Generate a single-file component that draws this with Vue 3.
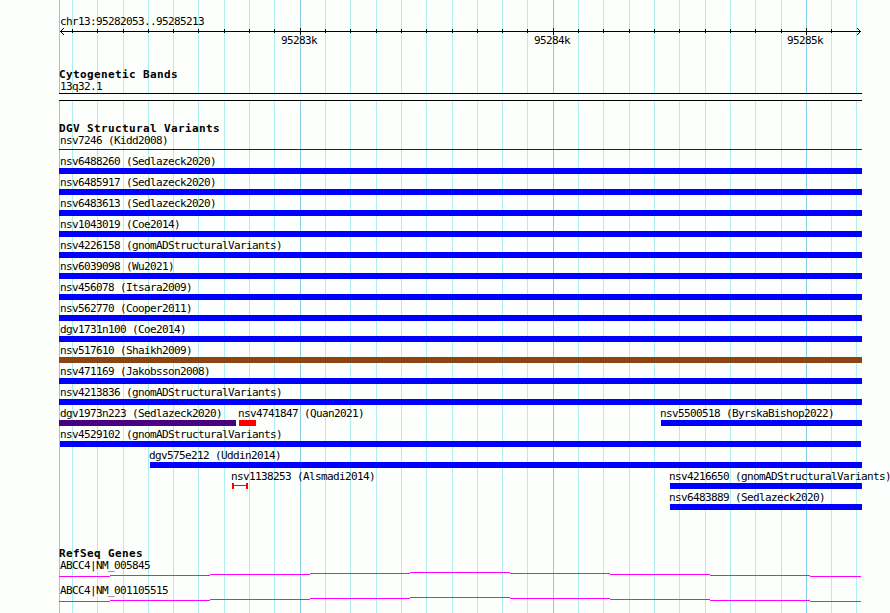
<script setup>
const LEFT = 59
const minorLines = [
  72, 97, 123, 148, 173, 198, 224, 249, 274, 325, 350, 376, 401, 426, 452,
  477, 502, 527, 578, 603, 629, 654, 679, 705, 730, 755, 781, 831, 856,
]
const majorLines = [300, 553, 806]
const scaleLabels = [
  { text: '95283k', x: 281 },
  { text: '95284k', x: 534 },
  { text: '95285k', x: 787 },
]

const full = (name, kind = 'gain') => [{ name, start: 59, end: 862, label: 60, kind }]
const rows = [
  full('nsv7246 (Kidd2008)', 'thin'),
  full('nsv6488260 (Sedlazeck2020)'),
  full('nsv6485917 (Sedlazeck2020)'),
  full('nsv6483613 (Sedlazeck2020)'),
  full('nsv1043019 (Coe2014)'),
  full('nsv4226158 (gnomADStructuralVariants)'),
  full('nsv6039098 (Wu2021)'),
  full('nsv456078 (Itsara2009)'),
  full('nsv562770 (Cooper2011)'),
  full('dgv1731n100 (Coe2014)'),
  full('nsv517610 (Shaikh2009)', 'mixed'),
  full('nsv471169 (Jakobsson2008)'),
  full('nsv4213836 (gnomADStructuralVariants)'),
  [
    { name: 'dgv1973n223 (Sedlazeck2020)', start: 59, end: 236, label: 60, kind: 'complex' },
    { name: 'nsv4741847 (Quan2021)', start: 239, end: 256, label: 238, kind: 'loss' },
    { name: 'nsv5500518 (ByrskaBishop2022)', start: 661, end: 862, label: 660, kind: 'gain' },
  ],
  [{ name: 'nsv4529102 (gnomADStructuralVariants)', start: 60, end: 861, label: 60, kind: 'gain' }],
  [{ name: 'dgv575e212 (Uddin2014)', start: 150, end: 862, label: 149, kind: 'gain' }],
  [
    { name: 'nsv1138253 (Alsmadi2014)', start: 232, end: 248, label: 231, kind: 'span' },
    { name: 'nsv4216650 (gnomADStructuralVariants)', start: 670, end: 862, label: 669, kind: 'gain' },
  ],
  [{ name: 'nsv6483889 (Sedlazeck2020)', start: 670, end: 862, label: 669, kind: 'gain' }],
]

const genes = ['ABCC4|NM_005845', 'ABCC4|NM_001105515']
const geneSteps = [
  [59, 110, 4], [110, 210, 3], [210, 310, 2], [310, 410, 1], [410, 510, 0],
  [510, 610, 1], [610, 710, 2], [710, 810, 3], [810, 861, 4],
]
const px = (n) => `${n}px`
</script>

<template>
  <main class="browser">
    <svg class="gridlines" width="890" height="613" shape-rendering="crispEdges" aria-hidden="true">
      <rect v-for="x in minorLines" :key="x" :x="x" y="0" width="1" height="613" fill="#afeeee" />
      <rect v-for="x in [LEFT, ...majorLines]" :key="x" :x="x" y="0" width="1" height="613" fill="#87ceeb" />
    </svg>

    <header class="scale">
      <div class="label region">chr13:95282053..95285213</div>
      <svg class="axis" width="890" height="9" shape-rendering="crispEdges">
        <rect x="60" y="4" width="801" height="1" />
        <rect v-for="x in minorLines.slice(0, -1)" :key="x" :x="x" y="2" width="1" height="4" />
        <rect v-for="x in majorLines" :key="x" :x="x" y="1" width="1" height="7" />
        <template v-for="i in 3" :key="i">
          <rect :x="60 + i" :y="4 - i" width="1" height="1" />
          <rect :x="60 + i" :y="4 + i" width="1" height="1" />
          <rect :x="860 - i" :y="4 - i" width="1" height="1" />
          <rect :x="860 - i" :y="4 + i" width="1" height="1" />
        </template>
      </svg>
      <div class="lane numbers">
        <span v-for="s in scaleLabels" :key="s.text" class="label" :style="{ marginLeft: px(s.x) }">{{ s.text }}</span>
      </div>
    </header>

    <section class="bands">
      <h2>Cytogenetic Bands</h2>
      <div class="label region">13q32.1</div>
      <div class="band"></div>
    </section>

    <section class="variants">
      <h2>DGV Structural Variants</h2>
      <div v-for="(row, i) in rows" :key="i" class="lane row">
        <div v-for="v in row" :key="v.name" class="variant">
          <div class="label" :style="{ marginLeft: px(v.label) }">{{ v.name }}</div>
          <div class="bar" :class="v.kind" :style="{ marginLeft: px(v.start), width: px(v.end - v.start) }"></div>
        </div>
      </div>
    </section>

    <section class="genes">
      <h2>RefSeq Genes</h2>
      <div v-for="g in genes" :key="g" class="gene">
        <div class="label region">{{ g }}</div>
        <svg class="intron" width="890" height="5" shape-rendering="crispEdges">
          <rect v-for="s in geneSteps" :key="s[0]" :x="s[0]" :y="s[2]" :width="s[1] - s[0]" height="1" fill="#ff00ff" />
        </svg>
      </div>
    </section>
  </main>
</template>

<style>
body {
  margin: 0;
  background: #fdfffc;
  overflow: hidden;
}
</style>

<style scoped>
.browser {
  position: relative;
  width: 890px;
  height: 613px;
  overflow: hidden;
  color: #000;
  font-family: "DejaVu Sans Mono", monospace;
  font-size: 11px;
  line-height: 13px;
}
.gridlines {
  position: absolute;
  inset: 0;
  z-index: -1;
}
.label {
  height: 13px;
  white-space: pre;
  letter-spacing: -0.622px;
}
.region {
  margin-left: 60px;
}
h2 {
  margin: 0 0 0 59px;
  height: 12px;
  font-size: 11px;
  font-weight: 700;
  line-height: 13px;
  letter-spacing: 0.378px;
}
.lane {
  display: grid;
}
.lane > * {
  grid-area: 1 / 1;
}
.scale {
  height: 53px;
  padding-top: 15px;
}
.axis {
  display: block;
  margin-top: -1px;
}
.numbers {
  margin-top: -2px;
}
.bands {
  height: 54px;
}
.band {
  box-sizing: border-box;
  width: 803px;
  height: 8px;
  margin-left: 59px;
  border: solid #000;
  border-width: 1px 0;
  background: #fdfffc;
}
.row {
  height: 21px;
}
.bar {
  height: 6px;
}
.gain {
  background: #0000ff;
}
.mixed {
  background: #8b4513;
}
.complex {
  background: #4b0082;
}
.loss {
  background: #ff0000;
}
.thin {
  height: 1px;
  margin-top: 2px;
  background: #4b0082;
}
.span {
  box-sizing: border-box;
  border: solid #ff0000;
  border-width: 0 2px;
  background: linear-gradient(#ff0000, #ff0000) 0 2px / 100% 1px no-repeat;
}
.variants {
  height: 425px;
}
.gene {
  height: 25px;
}
.intron {
  display: block;
}
</style>
